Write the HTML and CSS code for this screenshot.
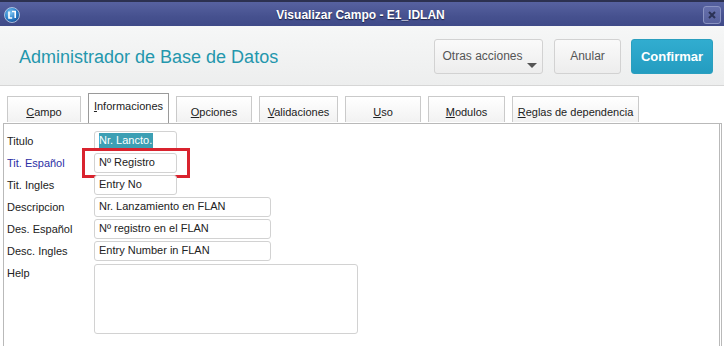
FILE: index.html
```html
<!DOCTYPE html>
<html lang="es">
<head>
<meta charset="utf-8">
<title>Visualizar Campo - E1_IDLAN</title>
<link rel="stylesheet" href="styles.css">
</head>
<body>
<div class="window">
  <div class="titlebar">
    <span class="logo">
      <svg width="16" height="16" viewBox="0 0 16 16">
        <defs>
          <radialGradient id="g" cx="0.4" cy="0.35" r="0.7">
            <stop offset="0" stop-color="#7fc6f2"/>
            <stop offset="0.6" stop-color="#2a7fc9"/>
            <stop offset="1" stop-color="#1a4f94"/>
          </radialGradient>
        </defs>
        <circle cx="8" cy="8" r="7.5" fill="url(#g)" stroke="#c8d4ea" stroke-width="0.8"/>
        <path d="M5 4.5v6.5h3.2M8 4.5h3.2v6.5" fill="none" stroke="#ffffff" stroke-width="1.6"/>
      </svg>
    </span>
    <span class="title">Visualizar Campo - E1_IDLAN</span>
    <span class="close">
      <svg width="8" height="8" viewBox="0 0 8 8"><path d="M1 1L7 7M7 1L1 7" stroke="#2b3255" stroke-width="2"/></svg>
    </span>
  </div>
  <div class="header">
    <h1 class="app-title">Administrador de Base de Datos</h1>
    <div class="actions">
      <button class="btn btn-more">Otras acciones<span class="caret"></span></button>
      <button class="btn btn-cancel">Anular</button>
      <button class="btn btn-primary">Confirmar</button>
    </div>
  </div>
  <div class="tabs">
    <div class="tab t-campo"><u>C</u>ampo</div>
    <div class="tab active"><u>I</u>nformaciones</div>
    <div class="tab t-opc"><u>O</u>pciones</div>
    <div class="tab t-val"><u>V</u>alidaciones</div>
    <div class="tab t-uso"><u>U</u>so</div>
    <div class="tab t-mod"><u>M</u>odulos</div>
    <div class="tab t-reglas"><u>R</u>eglas de dependencia</div>
  </div>
  <div class="panel">
    <div class="row"><span class="label">Titulo</span><div class="field short"><span class="sel">Nr. Lancto.</span></div></div>
    <div class="row"><span class="label blue">Tit. Español</span><div class="field short">Nº Registro</div><span class="mark"></span></div>
    <div class="row"><span class="label">Tit. Ingles</span><div class="field short">Entry No</div></div>
    <div class="row"><span class="label">Descripcion</span><div class="field long">Nr. Lanzamiento en FLAN</div></div>
    <div class="row"><span class="label">Des. Español</span><div class="field long">Nº registro en el FLAN</div></div>
    <div class="row"><span class="label">Desc. Ingles</span><div class="field long">Entry Number in FLAN</div></div>
    <div class="row help"><span class="label">Help</span><div class="field area"></div></div>
  </div>
</div>
</body>
</html>
```

FILE: styles.css
```css
* { box-sizing: border-box; }
html, body { margin: 0; padding: 0; }
body {
  width: 724px;
  height: 346px;
  overflow: hidden;
  background: #ffffff;
  font-family: "Liberation Sans", Arial, sans-serif;
  font-size: 11px;
  color: #222;
}
.window { display: flex; flex-direction: column; height: 346px; }

.titlebar {
  height: 26px;
  display: flex;
  align-items: center;
  padding: 2px 3px 0 4px;
  border-top: 2px solid #2c3150;
  background: linear-gradient(#5762a0, #46518f 60%, #3f4a88);
}
.logo { width: 16px; height: 16px; display: flex; }
.title {
  flex: 1;
  text-align: center;
  color: #ffffff;
  font-weight: bold;
  font-size: 12px;
  text-shadow: 0 1px 1px #1e2445;
  margin-left: -2px;
}
.close {
  width: 18px; height: 18px;
  border: 1px solid #8a93c2;
  border-radius: 3px;
  background: linear-gradient(#6670ac, #56609c);
  display: flex; align-items: center; justify-content: center;
}

.header {
  height: 60px;
  display: flex;
  align-items: center;
  justify-content: space-between;
  padding: 0 11px 0 19px;
  background: linear-gradient(#f6f7f7, #edeeee);
  border-bottom: 1px solid #d6d6d6;
}
.app-title {
  margin: 0;
  font-size: 18px;
  font-weight: normal;
  color: #2497ad;
  padding-top: 3px;
}
.actions { display: flex; gap: 10px; padding-top: 1px; }
.btn {
  height: 35px;
  border: 1px solid #d2d2d2;
  border-radius: 3px;
  background: linear-gradient(#fafafa, #ededed);
  font-family: "Liberation Sans", Arial, sans-serif;
  font-size: 12px;
  color: #555;
  padding: 0;
  position: relative;
}
.btn-more { width: 109px; padding-right: 12px; padding-bottom: 1px; }
.btn-cancel { width: 67px; margin-left: 1px; }
.btn-primary {
  width: 82px;
  border-color: #2a9fbf;
  background: linear-gradient(#31add0, #249cc0);
  color: #ffffff;
  font-weight: bold;
  font-size: 13px;
}
.caret {
  position: absolute;
  right: 5px;
  bottom: 5px;
  width: 0; height: 0;
  border-left: 5px solid transparent;
  border-right: 5px solid transparent;
  border-top: 5px solid #555;
}

.tabs {
  display: flex;
  align-items: flex-end;
  gap: 7px;
  padding: 5px 0 0 7px;
  height: 36px;
}
.tab {
  height: 26px;
  padding: 9px 0 0;
  text-align: center;
  border: 1px solid #cacaca;
  border-bottom: none;
  background: linear-gradient(#ffffff, #f2f2f2);
  color: #222;
  white-space: nowrap;
}
.t-campo { width: 74px; }
.t-opc { width: 76px; }
.t-val { width: 79px; }
.t-uso { width: 76px; }
.t-mod { width: 77px; }
.t-reglas { width: 127px; }
.tab.active {
  width: 81px;
  height: 31px;
  padding-top: 6px;
  border-color: #9a9a9a;
  background: #ffffff;
  margin-bottom: -2px;
}

.panel {
  flex: 1;
  margin: 1px 2px 0 3px;
  border: 1px solid #b9b9b9;
  border-right: 3px double #b9b9b9;
  border-bottom: none;
  padding: 7px 0 0 3px;
  display: flex;
  flex-direction: column;
  gap: 2px;
}
.row {
  display: flex;
  align-items: center;
  height: 20px;
  position: relative;
}
.row.help { align-items: flex-start; height: 70px; margin-top: 1px; }
.row.help .label { padding-top: 3px; }
.label { width: 87px; color: #222; }
.label.blue { color: #2b2fa5; }
.field {
  height: 20px;
  border: 1px solid #d2d2d2;
  border-radius: 3px;
  padding: 2px 4px 0;
  color: #222;
  white-space: nowrap;
  background: #ffffff;
}
.field.short { width: 83px; }
.field.long { width: 177px; }
.field.area { width: 264px; height: 70px; }
.sel { background: #3c9fb4; color: #ffffff; padding: 1px 1px 2px 0; }
.mark {
  position: absolute;
  left: 75px;
  top: -5px;
  width: 108px;
  height: 30px;
  border: 3px solid #d9232e;
}
```
